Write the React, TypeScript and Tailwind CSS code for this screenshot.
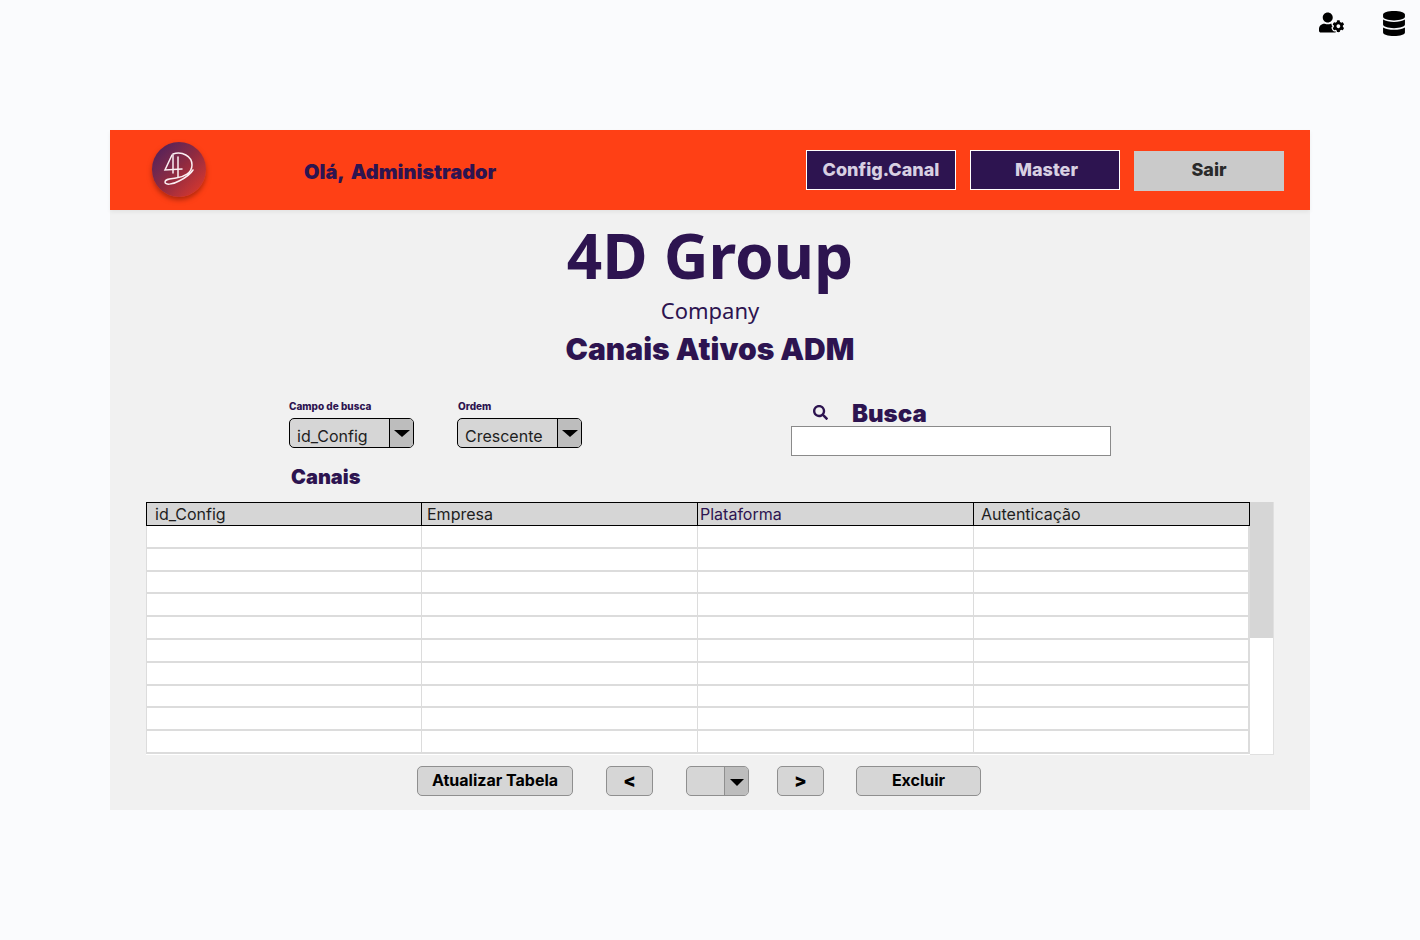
import React from 'react';
import { FaDatabase, FaSearch, FaUserCog } from 'react-icons/fa';

const columns = ['id_Config', 'Empresa', 'Plataforma', 'Autenticação'];
const rows = Array.from({ length: 10 }, (_, i) => i);

const Logo = () => (
  <div className="w-[54px] h-[55px] rounded-full bg-gradient-to-br from-[#461a5e] via-[#8f2a40] to-[#e8391f] shadow-[0_3px_5px_rgba(110,20,10,0.55)]">
    <svg viewBox="0 0 54 55" className="w-full h-full" fill="none" stroke="#fbeef2" strokeWidth="1.5" strokeLinecap="round">
      <path d="M21 12 C30 9 40 14 40 23 C40 31 32 35 24 36 C18 37 13 37 13 40 C13 43 20 43 27 39 C33 36 38 33 41 28" />
      <path d="M20 13 L13 28 L30 27" />
      <path d="M21 13 L21 31" />
      <path d="M26 15 L26 35" />
    </svg>
  </div>
);

const SelectBox = ({ value, width }: { value: string; width: string }) => (
  <div className={`${width} h-[30px] flex rounded-[5px] border border-black bg-[#d6d6d6] overflow-hidden`}>
    <div className="flex-1 pl-[7px] pt-[6px] text-[16px] leading-[23px] text-[#1e1e1e]">{value}</div>
    <div className="w-[24px] flex items-center justify-center border-l border-black bg-[#bdbdbd]">
      <div className="w-0 h-0 border-x-[8px] border-x-transparent border-t-[7px] border-t-black" />
    </div>
  </div>
);

const GreyButton = ({ label, width, size = 'text-[16px] font-bold' }: { label: string; width: string; size?: string }) => (
  <button className={`${width} ${size} h-[30px] rounded-[5px] border border-[#8f8f8f] bg-[#d6d6d6] text-black pb-[3px]`}>
    {label}
  </button>
);

export default function App() {
  return (
    <div className="min-h-[940px] bg-[#fafbfd] font-['Inter',sans-serif]">
      <div className="h-[130px] flex justify-end items-start pt-[11px] pr-[14px] gap-[38px] text-black">
        <FaUserCog className="w-[25px] h-[21px] mt-[1px]" />
        <FaDatabase className="w-[24px] h-[25px]" />
      </div>

      <div className="mx-[110px] h-[680px] bg-[#f1f1f1]">
        <div className="h-[80px] flex items-center bg-[#ff4015] shadow-[0_2px_4px_rgba(0,0,0,0.06)]">
          <div className="ml-[42px] -mt-[2px]"><Logo /></div>
          <div className="ml-[98px] mt-[4px] text-[20px] font-black text-[#2d1450] [word-spacing:3px]">Olá, Administrador</div>
          <div className="ml-auto mr-[26px] flex gap-[14px] text-[18px] font-extrabold">
            <button className="w-[150px] h-[40px] border border-white bg-[#2d1450] text-[#d8d0e2]">Config.Canal</button>
            <button className="w-[150px] h-[40px] border border-white bg-[#2d1450] text-[#d8d0e2] pl-[3px]">Master</button>
            <button className="w-[150px] h-[40px] mt-[1px] bg-[#cacaca] text-[#2a2a2a] pb-[2px]">Sair</button>
          </div>
        </div>

        <div className="flex flex-col items-center text-[#2d1450]">
          <h1 className="mt-[8px] h-[74px] text-[62px] leading-[74px] font-bold font-['Noto_Sans',sans-serif]">4D Group</h1>
          <div className="mt-[3px] h-[30px] text-[22px] leading-[30px] font-['Noto_Sans',sans-serif]">Company</div>
          <h2 className="mt-[4px] h-[40px] text-[30px] leading-[40px] font-black">Canais Ativos ADM</h2>
        </div>

        <div className="mt-[31px] flex pl-[179px]">
          <div>
            <div className="flex gap-[43px]">
              <div>
                <div className="h-[12px] text-[10px] leading-[12px] font-extrabold text-[#2d1450]">Campo de busca</div>
                <div className="mt-[6px]"><SelectBox value="id_Config" width="w-[125px]" /></div>
              </div>
              <div>
                <div className="h-[12px] pl-[1px] text-[10px] leading-[12px] font-extrabold text-[#2d1450]">Ordem</div>
                <div className="mt-[6px]"><SelectBox value="Crescente" width="w-[125px]" /></div>
              </div>
            </div>
            <div className="mt-[16px] ml-[2px] h-[26px] text-[20px] leading-[26px] font-black text-[#2d1450]">Canais</div>
          </div>
          <div className="ml-[209px] pt-[2px]">
            <div className="h-[20px] flex items-center text-[#2d1450]">
              <FaSearch className="ml-[22px] w-[15px] h-[15px]" />
              <span className="ml-[24px] text-[24px] font-black mt-[3px]">Busca</span>
            </div>
            <input className="mt-[4px] block w-[320px] h-[30px] border border-[#8a8a8a] bg-white" />
          </div>
        </div>

        <div className="mt-[12px] ml-[36px] w-[1128px] h-[253px] flex bg-white">
          <div className="w-[1104px]">
            <div className="h-[24px] grid grid-cols-[275px_276px_276px_277px] bg-[#d6d6d6] border-y border-black text-[16px] leading-[22px] text-[#1e1e1e]">
              {columns.map((col, i) => (
                <div
                  key={col}
                  className={`border-l border-black ${i === 3 ? 'border-r' : ''} ${i === 0 ? 'pl-[8px]' : i === 1 ? 'pl-[5px]' : i === 2 ? 'pl-[2px] text-[#2d1450]' : 'pl-[7px]'}`}
                >
                  {col}
                </div>
              ))}
            </div>
            {rows.map((r) => (
              <div key={r} className="h-[22.8px] grid grid-cols-[275px_276px_276px_277px] border-b-2 border-[#dcdcdc]">
                {columns.map((col, i) => (
                  <div key={col} className={`border-l border-[#dcdcdc] ${i === 3 ? 'border-r-2' : ''}`} />
                ))}
              </div>
            ))}
          </div>
          <div className="w-[24px] border-r border-b border-[#e0e0e0]">
            <div className="h-[136px] bg-[#d6d6d6]" />
          </div>
        </div>

        <div className="mt-[11px] pl-[307px] flex items-center">
          <GreyButton label="Atualizar Tabela" width="w-[156px]" />
          <div className="ml-[33px]"><GreyButton label="<" width="w-[47px]" size="text-[18px] font-black" /></div>
          <div className="ml-[33px] w-[63px] h-[30px] flex rounded-[5px] border border-[#8f8f8f] bg-[#d6d6d6] overflow-hidden">
            <div className="flex-1" />
            <div className="w-[24px] flex items-center justify-center border-l border-[#8f8f8f] bg-[#bdbdbd]">
              <div className="w-0 h-0 mt-[2px] border-x-[7px] border-x-transparent border-t-[7px] border-t-black" />
            </div>
          </div>
          <div className="ml-[28px]"><GreyButton label=">" width="w-[47px]" size="text-[18px] font-black" /></div>
          <div className="ml-[32px]"><GreyButton label="Excluir" width="w-[125px]" /></div>
        </div>
      </div>
    </div>
  );
}
